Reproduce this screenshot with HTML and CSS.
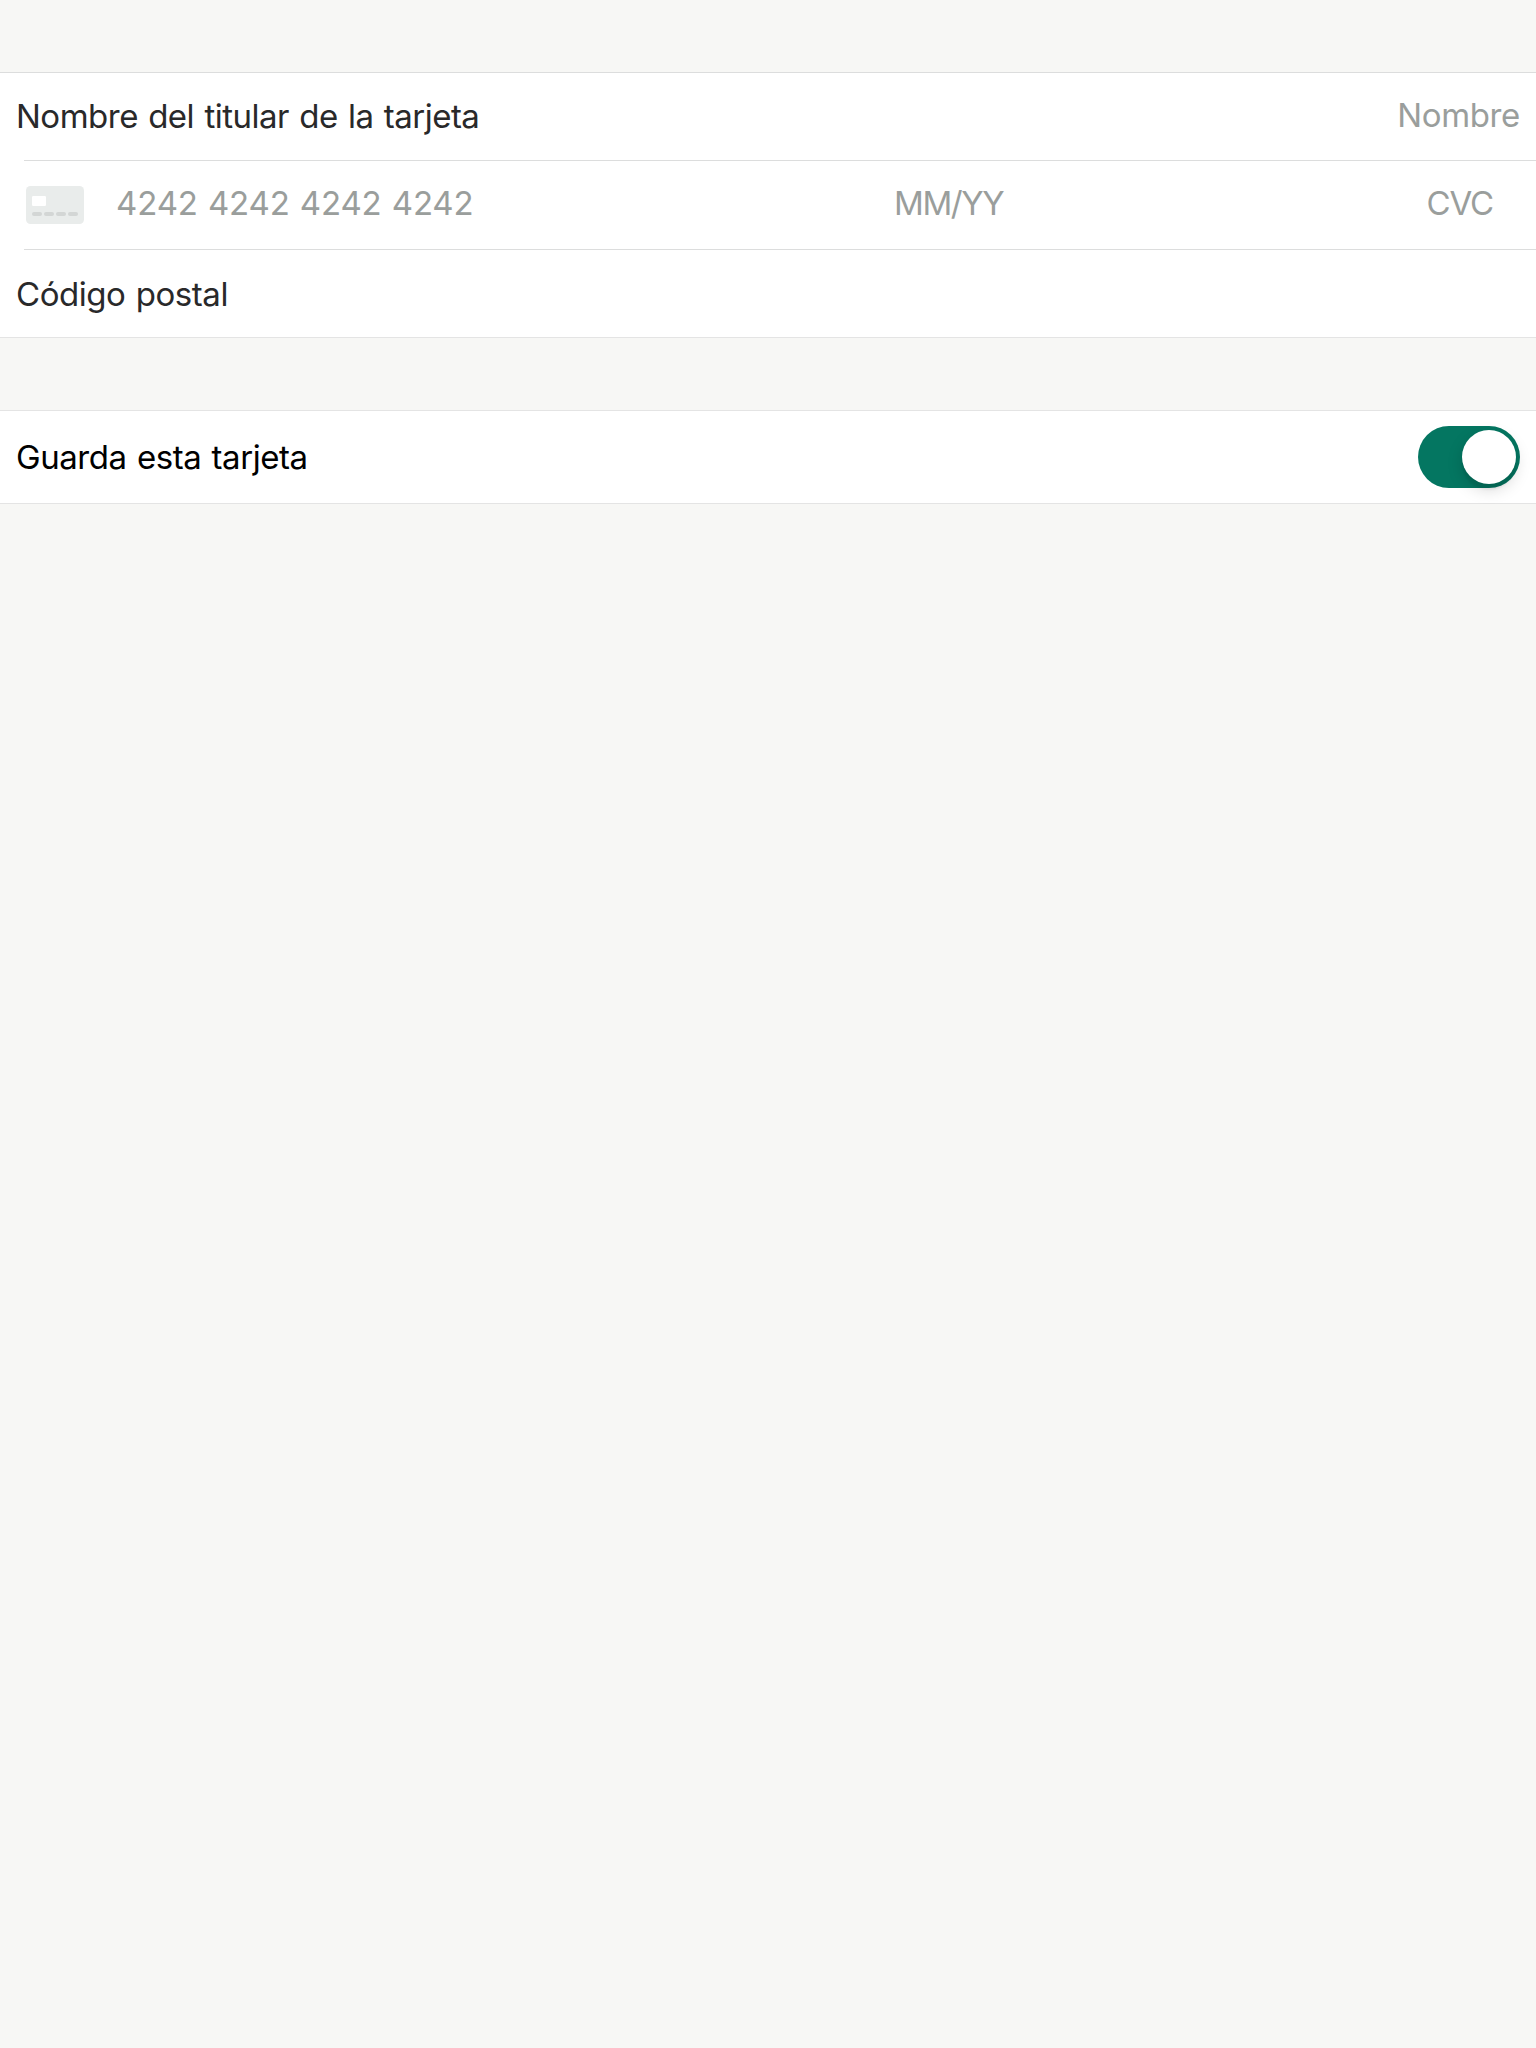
FILE: index.html
```html
<!DOCTYPE html>
<html lang="es">
<head>
<meta charset="utf-8">
<title>Tarjeta</title>
<link rel="stylesheet" href="styles.css">
</head>
<body>
<main class="page">
  <section class="group details">
    <div class="row name-row">
      <span class="label holder">Nombre del titular de la tarjeta</span>
      <span class="hint name">Nombre</span>
    </div>
    <div class="row card-row">
      <svg class="card-icon" width="58" height="38" viewBox="0 0 58 38">
        <rect width="58" height="38" rx="4.5" fill="#e9eceb"/>
        <rect x="6" y="10" width="14" height="10" rx="1.2" fill="#fff"/>
        <g fill="#d3d6d5">
          <rect x="6" y="26" width="10" height="4" rx="2"/>
          <rect x="18" y="26" width="10" height="4" rx="2"/>
          <rect x="30" y="26" width="10" height="4" rx="2"/>
          <rect x="42" y="26" width="10" height="4" rx="2"/>
        </g>
      </svg>
      <span class="hint number">4242 4242 4242 4242</span>
      <span class="hint expiry">MM/YY</span>
      <span class="hint cvc">CVC</span>
    </div>
    <div class="row postal-row">
      <span class="label postal">Código postal</span>
    </div>
  </section>
  <section class="group save">
    <div class="row save-row">
      <span class="save-label">Guarda esta tarjeta</span>
      <span class="toggle" role="switch" aria-checked="true"><span class="knob"></span></span>
    </div>
  </section>
</main>
</body>
</html>
```
FILE: styles.css
```css
* { box-sizing: border-box; }
body {
  margin: 0;
  background: #f7f7f5;
  font-family: Inter, "Liberation Sans", sans-serif;
  font-size: 33px;
  line-height: 40px;
  white-space: nowrap;
}
.page {
  display: flex;
  flex-direction: column;
  gap: 72px;
  min-height: 2048px;
  padding-top: 72px;
}
.group {
  background: #fff;
  border-top: 1px solid #dcdddd;
  border-bottom: 1px solid #e4e4e4;
}
.row { display: flex; align-items: flex-start; }
.label { color: #29292a; }
.hint { color: #9a9e9c; }
.name-row {
  justify-content: space-between;
  height: 87px;
  padding: 23px 16px 0;
}
.holder { letter-spacing: -0.5px; word-spacing: 1.5px; }
.name { margin-top: -1px; letter-spacing: -0.35px; }
.card-row {
  height: 90px;
  margin-left: 24px;
  padding: 22px 43px 0 2px;
  border-top: 1px solid #dcdddd;
  border-bottom: 1px solid #dcdddd;
}
.card-icon { margin-top: 3px; }
.number { width: 778px; margin-left: 32px; letter-spacing: -0.15px; word-spacing: 1px; }
.expiry { letter-spacing: -1.4px; }
.cvc { margin-left: auto; letter-spacing: -1.1px; }
.postal-row { height: 87px; padding: 24px 16px 0; }
.postal { letter-spacing: -0.45px; word-spacing: 1.5px; }
.save { border-top-color: #e4e4e4; }
.save-row {
  justify-content: space-between;
  height: 92px;
  padding: 15px 16px 0;
}
.save-label { margin-top: 11px; color: #000; letter-spacing: -0.45px; word-spacing: 1.5px; }
.toggle {
  display: flex;
  justify-content: flex-end;
  width: 102px;
  height: 62px;
  padding: 4px;
  border-radius: 31px;
  background: #047661;
}
.knob {
  width: 54px;
  height: 54px;
  border-radius: 50%;
  background: #fff;
  box-shadow: 0 6px 16px rgba(0, 0, 0, .15), 0 6px 2px rgba(0, 0, 0, .06);
}
```
